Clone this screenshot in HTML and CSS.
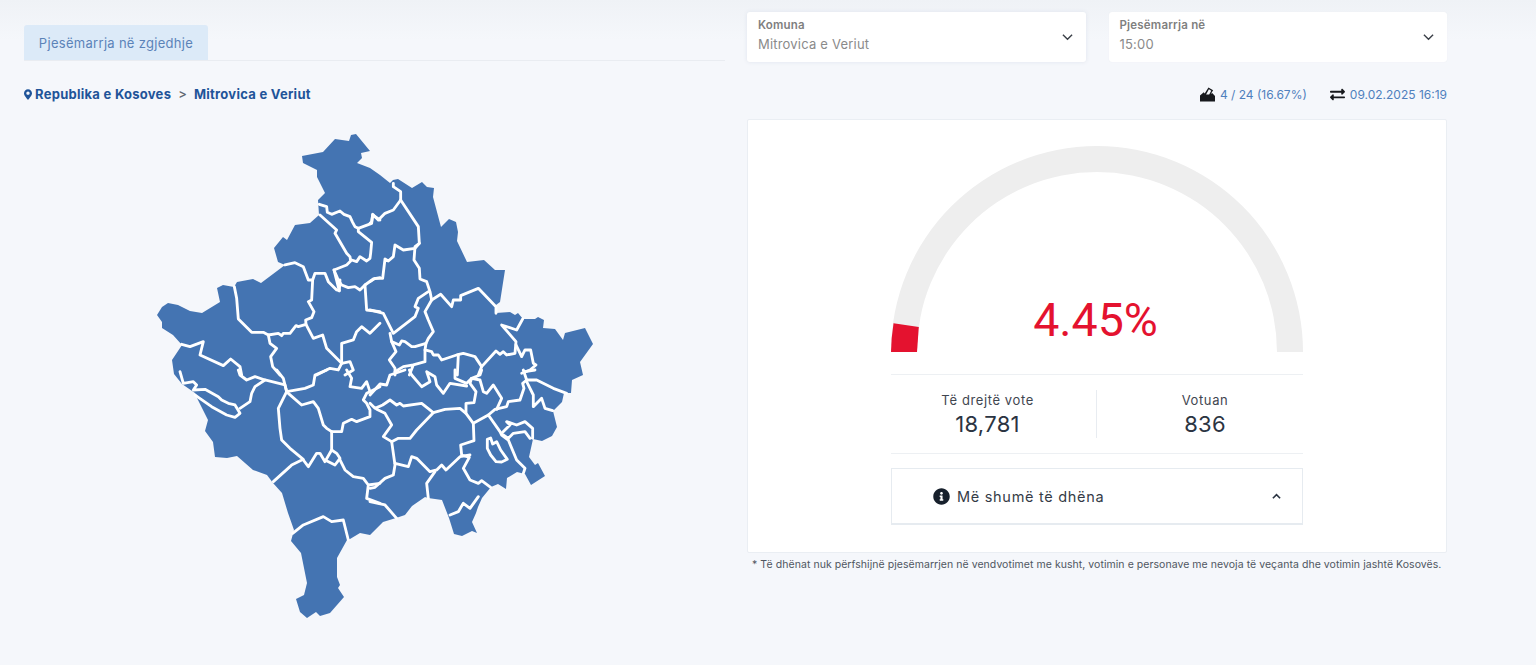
FILE: index.html
```html
<!DOCTYPE html>
<html lang="sq">
<head>
<meta charset="utf-8">
<title>Pjesëmarrja në zgjedhje</title>
<link rel="stylesheet" href="styles.css">
</head>
<body>
<main class="page">
  <section class="col-left">
    <div class="tabs"><button class="tab">Pjesëmarrja në zgjedhje</button></div>
    <nav class="crumbs">
      <svg class="pin" viewBox="0 0 384 512"><path d="M172.268 501.67C26.97 291.031 0 269.413 0 192 0 85.961 85.961 0 192 0s192 85.961 192 192c0 77.413-26.97 99.031-172.268 309.67-9.535 13.774-29.93 13.773-39.464 0zM192 272c44.183 0 80-35.817 80-80s-35.817-80-80-80-80 35.817-80 80 35.817 80 80 80z"/></svg>
      <a class="crumb">Republika e Kosoves</a><span class="sep">&gt;</span><a class="crumb">Mitrovica e Veriut</a>
    </nav>
    <svg class="map" viewBox="24 125 701 500">
      <path class="land" d="M302 156L323 152L335 139L349 141L351 135L356 134L370 151L361 153L362 158L357 163L370 168L380 175L390 183L393 180L398 179L412 188L422 182L427 187L434 188L433 197L441 227L449 219L456 222L458 232L457 241L467 262L484 260L495 270L505 270L500 302L496 305L496 313L510 312L515 315L518 313L523 319L535 319L538 317L544 320L543 328L555 329L563 340L565 333L585 328L593 344L580 362L583 375L572 380L571 393L564 393L562 402L553 411L557 427L552 436L542 441L533 439L529 457L535 465L538 463L545 476L531 485L525 474L517 472L507 478L506 489L498 484L491 487L482 498L478 507L476 513L472 522L477 533L472 531L462 536L454 534L449 518L442 500L428 498L425 497L412 506L405 515L396 518L383 522L370 535L360 533L350 539L347 540L337 558L337 577L340 585L338 588L344 597L330 613L320 616L316 612L307 618L300 612L296 599L304 595L307 583L301 553L291 541L294 530L288 513L282 493L273 483L267 475L253 470L237 456L227 458L215 457L213 442L205 431L208 420L197 398L195 393L182 384L174 374L172 360L182 345L173 335L162 328L162 322L157 315L162 307L168 303L178 305L190 311L202 313L220 302L217 288L223 285L234 287L237 282L253 279L261 283L285 265L278 262L274 248L283 237L287 240L295 225L310 223L319 215L318 200L325 193L317 177L317 170L303 163Z"/>
      <g class="borders nw">
        <path d="M538 238L560 245L562 262L575 268L600 258L612 268L630 275L638 292L645 305L655 310L695 295L698 270L720 285"/>
        <path d="M655 310L655 320L695 352L692 385L690 400L680 408L660 395L650 410L635 405"/>
        <path d="M540 270L590 315L585 325L620 385L630 395L632 408L620 420L582 435L595 465L605 480L625 488L645 485L660 495L675 480L700 462L720 458"/>
        <path d="M582 435L598 498L600 465"/>
        <path d="M435 420L465 413L490 425L505 465L518 465L525 445L555 445L565 470L590 495L598 497"/>
        <path d="M518 465L515 525L505 530L522 560L515 578L497 585L498 598L475 605L468 602L450 625L430 625L425 632L415 625L385 630L370 622L335 622L295 582L290 520L283 485"/>
        <path d="M498 598L520 640L548 630L560 670L605 715L595 735L570 730L530 750"/>
        <path d="M385 630L390 655L410 670L392 695L398 725L420 750"/>
        <path d="M605 715L605 655L640 645L650 620L665 605L690 625L720 595"/>
        <path d="M675 480L680 555L720 560"/>
        <path d="M125 658L150 665L190 650L180 690L250 722L272 702L300 725L305 750"/>
        <path d="M605 715L630 710L640 735L615 750"/>
      </g>
      <g class="borders ne">
        <path d="M70 175L70 185L92 200L92 225L70 255L45 265L25 285L8 268L5 290L0 295"/>
        <path d="M92 225L145 305L148 355L135 365L132 405L148 430L150 462L170 470L180 500L185 525"/>
        <path d="M148 355L135 370L100 375L75 360L70 395L55 408L45 402L38 460L15 460L0 470"/>
        <path d="M175 500L145 520L135 545L145 550L135 575L70 625L40 565L0 555"/>
        <path d="M185 525L165 560L175 585L190 620L175 640L168 655L135 665L125 665L105 650L95 648L88 660L65 650L60 625"/>
        <path d="M185 525L212 508L245 545L250 525L272 525L272 512L325 490L378 545L378 565"/>
        <path d="M458 582L440 615L395 600L438 650L435 685L410 690L400 680L390 688L378 678L335 725L325 750"/>
        <path d="M168 655L165 675L185 680L190 690L205 690L215 705L260 690L280 685L315 695L335 725"/>
        <path d="M265 690L262 750"/>
        <path d="M438 660L455 695L465 675L482 675L490 715L498 720L480 735L455 745"/>
        <path d="M65 650L78 680L58 705L75 730L75 750"/>
        <path d="M165 675L165 710L130 720L118 750M130 720L100 725L75 740"/>
      </g>
      <g class="borders sw">
        <path d="M120 5L130 40L160 35L170 45L160 60L195 58L235 80L245 90L265 100L285 105L300 130L285 142L260 135L215 110L175 82L165 75"/>
        <path d="M300 115L330 95L335 70L345 50L375 30L345 20L320 30L300 15L295 0"/>
        <path d="M375 30L435 45L440 65"/>
        <path d="M410 0L430 25L440 65L495 55L520 45L525 15L560 0"/>
        <path d="M440 65L415 115L420 175L425 210L450 235L490 268L455 285L450 290L400 335"/>
        <path d="M445 70L485 105L520 95L535 115L550 165L560 175L575 185L605 185L610 160L635 148L650 155L690 140L690 120L680 100L670 90L680 70L720 50"/>
        <path d="M620 0L635 25L630 50L665 55L680 35L690 65"/>
        <path d="M575 185L575 240L555 275L540 250L530 250L505 290L490 270"/>
        <path d="M575 240L590 250L600 265L585 285L555 270"/>
        <path d="M600 270L615 300L640 320L670 325L685 345L680 385L720 400M685 345L720 340"/>
        <path d="M458 490L490 465L550 440L575 455L610 450L625 510"/>
      </g>
      <g class="borders se">
        <path d="M0 75L30 42L50 45L60 15L105 0"/>
        <path d="M118 0L125 15L155 50L180 35L170 5L195 20L200 45L220 70L240 40L290 48"/>
        <path d="M255 0L255 25L290 40L305 25L330 15L335 0"/>
        <path d="M305 25L300 40L318 65L312 98L288 100L288 130L310 160L355 135L390 185L395 195L415 210L440 270L465 295L460 310"/>
        <path d="M288 130L270 115L225 118L190 128L155 100L100 108L90 100L80 105L60 90L38 105L15 115L0 100"/>
        <path d="M190 128L140 180L120 205L85 205L65 215L40 200L65 165L45 130L20 118"/>
        <path d="M65 215L75 285L70 315L45 325L15 352L0 355"/>
        <path d="M75 280L115 290L125 260L140 265L180 305L200 300L215 285L228 300L270 260L300 255"/>
        <path d="M310 160L312 212L272 225L275 255L298 262L280 295L300 330L325 340L335 332L362 352"/>
        <path d="M195 305L170 340L175 385"/>
        <path d="M0 395L45 405L80 445"/>
        <path d="M352 208L362 204L368 222L380 215L392 240L412 268L395 276L378 275L362 255L352 235Z"/>
        <path d="M395 190L420 165L410 155L440 165L465 155L488 175L488 205M400 195L415 205L430 190L465 185L480 205"/>
        <path d="M355 135L375 118L410 110L415 95L450 90L462 55L458 40L470 30L460 0"/>
        <path d="M305 25L330 30L340 65L350 70L370 45L395 85L380 118"/>
        <path d="M470 35L490 75L490 110L515 85L525 115L548 122"/>
        <path d="M470 30L500 30L550 55L590 70M465 5L495 0"/>
        <path d="M240 435L265 425L280 400L300 415L325 380"/>
      </g>
    </svg>
  </section>

  <section class="col-right">
    <div class="filters">
      <div class="select select-active">
        <div class="select-text"><span class="select-label">Komuna</span><span class="select-value">Mitrovica e Veriut</span></div>
        <svg class="chevron" viewBox="0 0 12 8"><path d="M1 1.5L6 6.5L11 1.5"/></svg>
      </div>
      <div class="select">
        <div class="select-text"><span class="select-label">Pjesëmarrja në</span><span class="select-value">15:00</span></div>
        <svg class="chevron" viewBox="0 0 12 8"><path d="M1 1.5L6 6.5L11 1.5"/></svg>
      </div>
    </div>

    <div class="meta">
      <span class="meta-item">
        <svg class="meta-icon" viewBox="0 0 16 16"><path d="M0 9L4 5.500L5 7L9 0.500L14 3.500L11.500 7.500L13 6.500L16 9.500V15.500H0ZM6.500 8H9.800L12 4L9.500 2.500Z"/></svg>
        4 / 24 (16.67%)
      </span>
      <span class="meta-item">
        <svg class="meta-icon" viewBox="0 0 512 512"><path d="M0 168v-16c0-13.255 10.745-24 24-24h360V80c0-21.367 25.899-32.042 40.971-16.971l80 80c9.372 9.373 9.372 24.569 0 33.941l-80 80C409.956 271.982 384 261.456 384 240v-48H24c-13.255 0-24-10.745-24-24zm488 152H128v-48c0-21.314-25.862-32.08-40.971-16.971l-80 80c-9.372 9.373-9.372 24.569 0 33.941l80 80C102.057 463.997 128 453.437 128 432v-48h360c13.255 0 24-10.745 24-24v-16c0-13.255-10.745-24-24-24z"/></svg>
        09.02.2025 16:19
      </span>
    </div>

    <div class="card">
      <div class="gauge">
        <svg class="gauge-arc" viewBox="0 0 412 206">
          <path class="track" d="M0 206A206 206 0 0 1 412 206H386A180 180 0 0 0 26 206Z"/>
          <path class="fill" d="M0 206A206 206 0 0 1 2.500 177.300L27.800 181L26 206Z"/>
        </svg>
        <div class="gauge-value">4.45%</div>
      </div>
      <div class="stats">
        <div class="stat stat-left"><span class="stat-label">Të drejtë vote</span><span class="stat-value">18,781</span></div>
        <div class="stat stat-right"><span class="stat-label">Votuan</span><span class="stat-value">836</span></div>
      </div>
      <div class="more">
        <svg class="info" viewBox="0 0 512 512"><path d="M256 8C119 8 8 119 8 256s111 248 248 248 248-111 248-248S393 8 256 8zm0 110c23.196 0 42 18.804 42 42s-18.804 42-42 42-42-18.804-42-42 18.804-42 42-42zm56 254c0 6.627-5.373 12-12 12h-88c-6.627 0-12-5.373-12-12v-24c0-6.627 5.373-12 12-12h12v-64h-12c-6.627 0-12-5.373-12-12v-24c0-6.627 5.373-12 12-12h64c6.627 0 12 5.373 12 12v100h12c6.627 0 12 5.373 12 12v24z"/></svg>
        <span class="more-text">Më shumë të dhëna</span>
        <svg class="chevron-up" viewBox="0 0 10 7"><path d="M1 5.500L5 1.500L9 5.500"/></svg>
      </div>
    </div>
    <p class="note">* Të dhënat nuk përfshijnë pjesëmarrjen në vendvotimet me kusht, votimin e personave me nevoja të veçanta dhe votimin jashtë Kosovës.</p>
  </section>
</main>
</body>
</html>
```

FILE: styles.css
```css
* { box-sizing: border-box; }
html, body { margin: 0; height: 100%; overflow: hidden; }
body {
  background: linear-gradient(#eff2f6, #f5f7fb 40px);
  font-family: Inter, "Open Sans", sans-serif;
  color: #2b3442;
}
.page {
  display: grid;
  grid-template-columns: 701px 700px;
  column-gap: 22px;
  padding-left: 24px;
}
.col-left { padding-top: 25px; }
.tabs { height: 36px; border-bottom: 1px solid #e9ecf1; }
.tab {
  display: block;
  width: 184px;
  height: 35px;
  border: 0;
  padding: 0;
  border-radius: 3px 3px 0 0;
  background: #dceaf8;
  color: #5b83b8;
  font: 400 13px Inter, sans-serif;
  letter-spacing: 0.3px;
}
.crumbs {
  display: flex;
  align-items: center;
  height: 18px;
  margin-top: 24px;
  font-size: 13px;
  font-weight: 700;
  color: #1f5499;
}
.pin { width: 8px; height: 11px; margin-right: 3px; fill: #1f5499; }
.crumb { letter-spacing: 0.27px; }
.sep { margin: 0 7px; color: #5e6672; font-weight: 500; }
.map { display: block; width: 701px; height: 500px; margin-top: 22px; }
.land { fill: #4474b2; }
.borders { fill: none; stroke: #fff; stroke-width: 8.5; stroke-linejoin: round; stroke-linecap: round; }
.nw { transform: translate(140px, 125px) scale(0.3333); }
.ne { transform: translate(370px, 125px) scale(0.3333); }
.sw { transform: translate(140px, 370px) scale(0.3333); }
.se { transform: translate(370px, 370px) scale(0.3333); }

.col-right { padding-top: 12px; }
.filters { display: grid; grid-template-columns: 339px 1fr; column-gap: 22.500px; }
.select {
  display: flex;
  align-items: center;
  justify-content: space-between;
  height: 50px;
  padding: 0 13px 0 11px;
  background: #fff;
  border-radius: 3px;
  box-shadow: 0 0 1px #e3e7ee;
}
.select-active { box-shadow: 0 0 4px #dfe4ed; }
.select-text { display: flex; flex-direction: column; gap: 4px; padding-bottom: 3px; }
.select-label { font-size: 11.500px; font-weight: 600; line-height: 14px; color: #7f7f7f; letter-spacing: 0.2px; }
.select-value { font-size: 13px; line-height: 17px; color: #8a8a8a; letter-spacing: 0.2px; }
.chevron { width: 11px; height: 8px; fill: none; stroke: #3a3f47; stroke-width: 1.5; }
.meta {
  display: flex;
  justify-content: flex-end;
  align-items: center;
  gap: 23px;
  height: 16px;
  margin-top: 24px;
  font-size: 12px;
  color: #4f80bd;
}
.meta-item { display: flex; align-items: center; gap: 5px; }
.meta-icon { width: 15px; height: 15px; fill: #17191d; }
.card {
  height: 434px;
  margin-top: 17px;
  padding: 26px 143px 0;
  background: #fff;
  border: 1px solid #eaeef3;
  border-radius: 2px;
}
.gauge { position: relative; height: 206px; }
.gauge-arc { display: block; width: 412px; height: 206px; }
.track { fill: #eeeeee; }
.fill { fill: #e4122f; }
.gauge-value {
  position: absolute;
  left: 0;
  right: 3px;
  top: 144px;
  text-align: center;
  font: 400 46.500px/60px Roboto, sans-serif;
  color: #e4122f;
}
.stats {
  display: grid;
  grid-template-columns: 205px 207px;
  height: 80px;
  margin-top: 22px;
  padding: 15px 0;
  border-top: 1px solid #edf0f3;
  border-bottom: 1px solid #edf0f3;
}
.stat { display: flex; flex-direction: column; align-items: center; height: 48px; }
.stat-left { padding-right: 12px; }
.stat-right { padding-left: 10px; border-left: 1px solid #e8ecf1; }
.stat-label { font-size: 13px; line-height: 20px; letter-spacing: 0.6px; color: #3f4650; }
.stat-value { font-size: 22px; line-height: 28px; color: #2b3442; font-weight: 400; letter-spacing: 0.3px; }
.more {
  display: flex;
  align-items: center;
  height: 57px;
  margin-top: 14px;
  padding: 0 21px 0 41px;
  border: 1px solid #e6ebf0;
  border-bottom-width: 2px;
}
.info { width: 17px; height: 17px; margin-right: 7px; fill: #17202c; }
.more-text { flex: 1; font-size: 14.500px; letter-spacing: 0.7px; color: #343b46; }
.chevron-up { width: 9px; height: 7px; fill: none; stroke: #2b3442; stroke-width: 1.8; }
.note { margin: 6px 0 0 5px; font-size: 10.500px; line-height: 12px; color: #4f5661; white-space: nowrap; letter-spacing: 0.05px; }
```
